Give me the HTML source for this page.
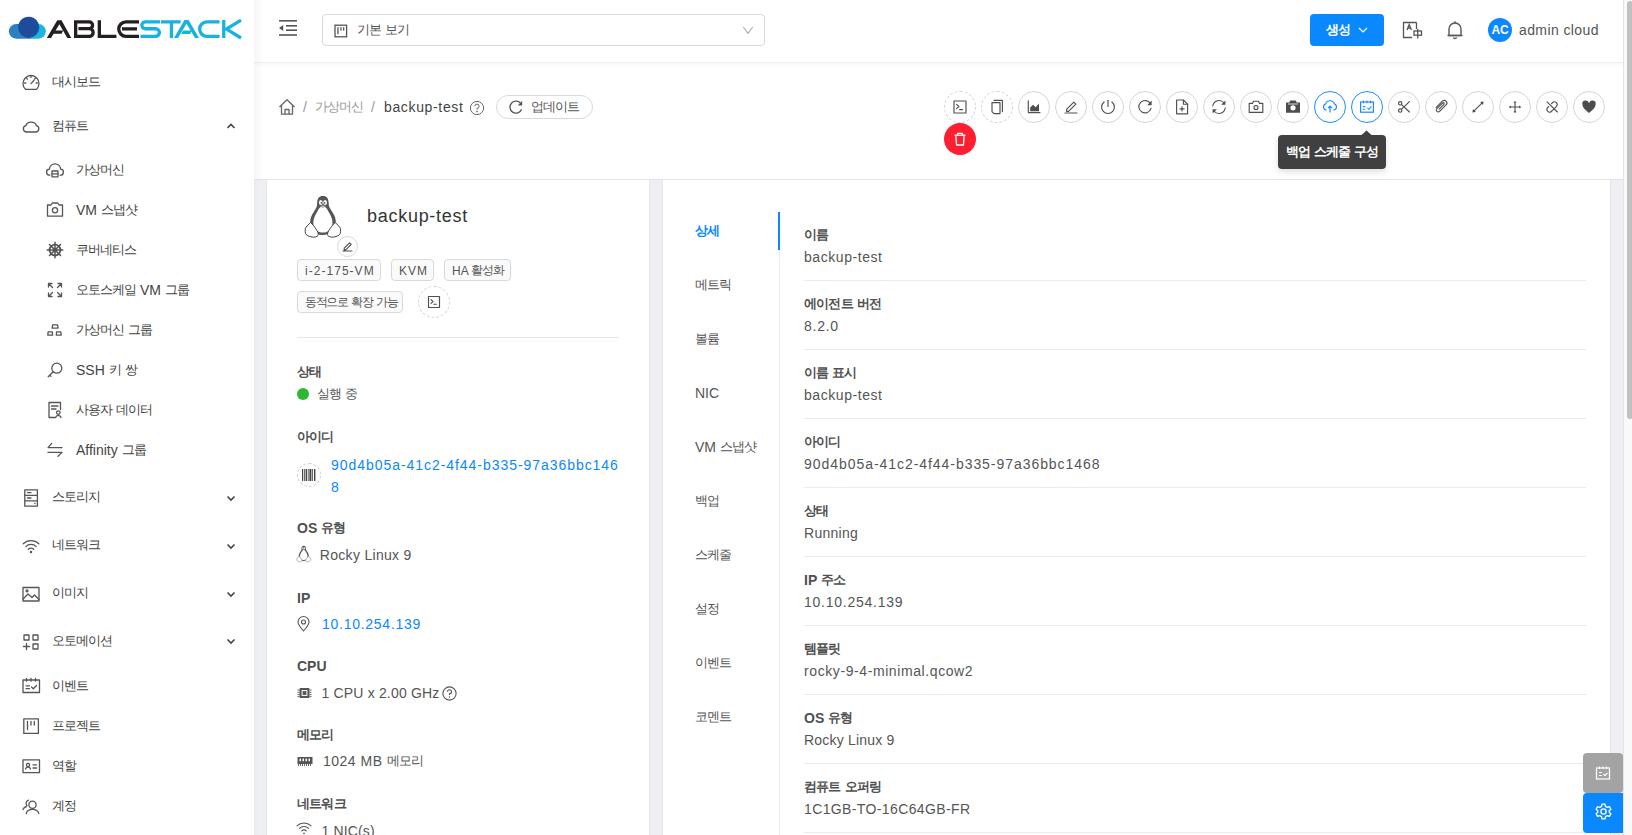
<!DOCTYPE html>
<html><head><meta charset="utf-8"><style>
*{box-sizing:border-box}
html,body{margin:0;padding:0}
body{width:1632px;height:835px;overflow:hidden;position:relative;background:#fff;font-family:"Liberation Sans",sans-serif;color:#444;font-size:14px}
.a{position:absolute}
svg{position:absolute;overflow:visible}
.t{position:absolute;font-size:14px;color:#444;white-space:nowrap;line-height:20px}
.k{font-size:13px;letter-spacing:-1px;position:relative;top:-1px}
.ic{fill:none;stroke:#555;stroke-width:1.3;stroke-linecap:round;stroke-linejoin:round}
.ib{fill:none;stroke:#505050;stroke-width:1.15;stroke-linecap:round;stroke-linejoin:round}
.cb{position:absolute;width:32px;height:32px;border-radius:50%;border:1px solid #d6d6d6;background:#fff}
.cb.d{border-style:dashed}
.cb svg{left:-1px;top:-1px}
.lb{font-weight:bold;color:#505050}
.lb .k{font-size:12.5px;letter-spacing:-0.8px}
.vl{color:#555}
.tag{position:absolute;height:22px;border:1px solid #d9d9d9;background:#fafafa;border-radius:4px;font-size:12px;line-height:20px;color:#555;padding:0 7px;white-space:nowrap}
.tg .k{font-size:11.5px;letter-spacing:-1.3px;top:-0.5px}
.dl{position:absolute;left:804px;width:782px;height:1px;background:#ebebeb}
</style></head><body>
<div class="a" style="left:0;top:0;width:254px;height:835px;background:#fff"></div><div class="a" style="left:254px;top:0;width:1369px;height:62px;background:#fff"></div><div class="a" style="left:254px;top:62px;width:1369px;height:1px;background:#eef0f3"></div><div class="a" style="left:254px;top:63px;width:1369px;height:5px;background:linear-gradient(rgba(0,10,40,.025),rgba(0,0,0,0))"></div><div class="a" style="left:254px;top:179px;width:1369px;height:1px;background:#e3e3e3"></div><div class="a" style="left:254px;top:180px;width:1369px;height:655px;background:#eeeff3"></div><div class="a" style="left:254px;top:0;width:10px;height:179px;background:linear-gradient(90deg,rgba(0,0,0,.03),rgba(0,0,0,0))"></div><div class="a" style="left:254px;top:180px;width:4px;height:655px;background:linear-gradient(90deg,rgba(0,0,0,.03),rgba(0,0,0,0))"></div><div class="a" style="left:266px;top:180px;width:384px;height:660px;background:#fff;border:1px solid #e4e4e4;border-top:none"></div><div class="a" style="left:662px;top:180px;width:949px;height:660px;background:#fff;border:1px solid #e4e4e4;border-top:none"></div><!-- logo -->
<svg style="left:0;top:0" width="254" height="60" viewBox="0 0 254 60">
  <path d="M16.2,24 A7.35,7.35 0 0 0 16.2,38.7 H31 V24 Z" fill="#2b80c2"/>
  <path d="M38.5,24 A7.35,7.35 0 0 1 38.5,38.7 H30 V24 Z" fill="#1bb5e2"/>
  <circle cx="28.7" cy="27.3" r="10.6" fill="#1d4c9c"/>
  <g fill="#231f20">
    <path d="M46.8,38 L57.3,20.2 H61.5 L71.3,38 H67.3 L59.4,24.2 L51,38 Z"/>
    <path d="M55,30.6 H63.2 L61.6,33.8 H53 Z"/>
  </g>
  <g fill="none" stroke="#231f20" stroke-width="3.3">
    <path d="M75.65,20.2 V38 M74,21.85 H89.2 A3.4,3.4 0 0 1 89.2,28.65 H78.4 M74,36.35 H89.3 A3.85,3.85 0 0 0 89.3,28.65"/>
    <path d="M99.35,20.2 V36.35 H116.4"/>
    <path d="M139,21.85 H126 A7.25,7.25 0 0 0 126,36.35 H139 M122,28.8 H137"/>
  </g>
  <g fill="none" stroke="#17b3e0" stroke-width="3.3">
    <path d="M160,21.85 H145.3 A3.45,3.45 0 0 0 145.3,28.75 H155.6 A3.8,3.8 0 0 1 155.6,36.35 H140.5"/>
    <path d="M161,21.85 H180.6 M171.45,21.85 V38"/>
    <path d="M219.6,21.85 H206.9 A7.25,7.25 0 0 0 206.9,36.35 H219.6"/>
    <path d="M223.75,20 V38 M241,20.2 L226.5,29.1 L241,38"/>
  </g>
  <g fill="#17b3e0">
    <path d="M174,38 L184.4,20.1 H188.6 L199,38 H195 L186.5,23.8 L178,38 Z"/>
    <path d="M183.2,30.4 H191.8 L190.2,34 H181 Z"/>
  </g>
</svg>
<!-- dashboard -->
<svg style="left:22px;top:73px" width="18" height="18" viewBox="0 0 18 18"><g class="ic"><path d="M3.6,16.4 A8,8 0 1 1 14.4,16.4 Z"/><path d="M9,10.6 L12,7.3 M9,3.2 V4.4 M4.6,5.3 L5.4,6.1 M2.6,10 H3.8 M14.2,10 H15.4 M13.4,5.3 L12.6,6.1"/></g></svg>
<!-- cloud -->
<svg style="left:22px;top:117px" width="18" height="18" viewBox="0 0 18 18"><path class="ic" d="M4.6,15 H13.6 A3.2,3.2 0 0 0 14.4,8.7 A5.5,5 0 0 0 3.8,8.7 A3.2,3.2 0 0 0 4.6,15 Z"/></svg>
<!-- vm -->
<svg style="left:46px;top:161px" width="18" height="18" viewBox="0 0 18 18"><g class="ic"><path d="M3.8,14.2 A3,3 0 0 1 3.4,8.2 A5.6,5.4 0 0 1 14.6,8.2 A3,3 0 0 1 14.2,14.2"/><rect x="6" y="10" width="6" height="5.8"/><path d="M6,12.9 H12"/></g></svg>
<!-- camera -->
<svg style="left:46px;top:200px" width="18" height="18" viewBox="0 0 18 18"><g class="ic"><path d="M1.5,5 H5 L6.3,3 H11.7 L13,5 H16.5 V16.2 H1.5 Z"/><circle cx="9" cy="10.3" r="2.6"/></g></svg>
<!-- helm -->
<svg style="left:46px;top:241px" width="18" height="18" viewBox="0 0 18 18"><g fill="none" stroke="#555" stroke-linecap="round"><circle cx="9" cy="9" r="5.4" stroke-width="1.9"/><circle cx="9" cy="9" r="1.6" stroke-width="1.4"/><path stroke-width="1.5" d="M9,1.2 V16.8 M1.2,9 H16.8 M3.5,3.5 L14.5,14.5 M14.5,3.5 L3.5,14.5"/></g></svg>
<!-- autoscale -->
<svg style="left:46px;top:281px" width="18" height="18" viewBox="0 0 18 18"><g class="ic"><path d="M2.5,6 V2.5 H6 M2.5,2.5 L6.5,6.5 M12,2.5 H15.5 V6 M15.5,2.5 L11.5,6.5 M2.5,12 V15.5 H6 M2.5,15.5 L6.5,11.5 M15.5,12 V15.5 H12 M15.5,15.5 L11.5,11.5"/></g></svg>
<!-- cluster -->
<svg style="left:46px;top:321px" width="18" height="18" viewBox="0 0 18 18"><g class="ic" stroke-width="1.4"><path d="M6.6,3.9 H11.6 L12,7.2 H6.2 Z"/><path d="M2.1,10.9 H6.3 L6.6,14.2 H1.8 Z"/><path d="M10.6,10.9 H14.8 L15.1,14.2 H10.3 Z"/></g></svg>
<!-- key -->
<svg style="left:46px;top:361px" width="18" height="18" viewBox="0 0 18 18"><g class="ic"><circle cx="10.8" cy="7.2" r="5"/><path d="M7.2,10.8 L2.2,15.8 M3.8,14.2 L5,15.4"/></g></svg>
<!-- userdata -->
<svg style="left:46px;top:401px" width="18" height="18" viewBox="0 0 18 18"><g class="ic"><path d="M9,16.5 H3 V1.5 H14.5 V8.5"/><path d="M5.5,5 H12 M5.5,8 H10"/><circle cx="12.3" cy="11.6" r="1.8"/><path d="M9.6,16.5 A2.8,2.8 0 0 1 15,16.5"/></g></svg>
<!-- affinity -->
<svg style="left:46px;top:441px" width="18" height="18" viewBox="0 0 18 18"><g class="ic" stroke-width="1.4"><path d="M16,6.6 H2 L5.7,2.4 M2,11.4 H16 L12,15.3"/></g></svg>
<!-- storage -->
<svg style="left:22px;top:489px" width="18" height="18" viewBox="0 0 18 18"><g class="ic"><rect x="2.8" y="0.8" width="12.6" height="16.4"/><path d="M2.8,6.3 H15.4 M2.8,11.8 H15.4 M5.5,3.6 H9 M5.5,9 H9 M12.8,14.5 H13"/></g></svg>
<!-- wifi -->
<svg style="left:22px;top:537px" width="18" height="18" viewBox="0 0 18 18"><g class="ic"><path d="M1.2,6.8 A11,11 0 0 1 16.8,6.8 M3.8,9.6 A7.4,7.4 0 0 1 14.2,9.6 M6.3,12.3 A3.8,3.8 0 0 1 11.7,12.3"/><circle cx="9" cy="15" r="0.6" fill="#555"/></g></svg>
<!-- image -->
<svg style="left:22px;top:585px" width="18" height="18" viewBox="0 0 18 18"><g class="ic"><rect x="1" y="2.5" width="16" height="13.5"/><path d="M1,14 L6,9 L10,12.5 L12.5,10 L17,14.5"/><circle cx="5" cy="5.8" r="1"/></g></svg>
<!-- automation -->
<svg style="left:22px;top:633px" width="18" height="18" viewBox="0 0 18 18"><g class="ic"><rect x="2" y="2" width="5" height="5"/><rect x="11" y="2" width="5" height="5"/><rect x="11" y="11" width="5" height="5"/><path d="M4.5,10.5 V16.5 M1.5,13.5 H7.5"/></g></svg>
<!-- event -->
<svg style="left:22px;top:677px" width="18" height="18" viewBox="0 0 18 18"><g class="ic"><rect x="1" y="3" width="16.5" height="12.5"/><path d="M4.5,1.3 V4.2 M9,1.3 V4.2 M13.5,1.3 V4.2 M4,8.8 H7.5 M4,11.6 H7.5 M9.5,10 L11.3,11.8 L14.5,8.5"/></g></svg>
<!-- project -->
<svg style="left:22px;top:717px" width="18" height="18" viewBox="0 0 18 18"><g class="ic" stroke-width="1.5"><rect x="1.8" y="1.8" width="14.6" height="14.6"/><path d="M5.5,4.5 V12.5 M9,4.5 V8 M12.3,4.5 V8"/></g></svg>
<!-- role -->
<svg style="left:22px;top:757px" width="18" height="18" viewBox="0 0 18 18"><g class="ic"><rect x="1" y="2.8" width="16.5" height="12.8"/><circle cx="6" cy="8" r="1.6"/><path d="M3.5,12 A2.6,2.6 0 0 1 8.5,12 M11,7.8 H14.5 M11,11 H14.5"/></g></svg>
<!-- user -->
<svg style="left:22px;top:797px" width="18" height="18" viewBox="0 0 18 18"><g class="ic"><circle cx="10.5" cy="7.8" r="3.6"/><path d="M4.2,16.6 A6.4,5.2 0 0 1 16.8,16.6 M6.6,3.2 A3.2,3.2 0 0 0 5,8.6 M1,12.5 A5,4.5 0 0 1 4.4,9.5"/></g></svg>
<!-- chevrons -->
<svg style="left:225px;top:120px" width="12" height="12" viewBox="0 0 12 12"><path d="M2.5,8 L6,4.5 L9.5,8" fill="none" stroke="#444" stroke-width="1.6"/></svg>
<svg style="left:225px;top:491.6px" width="12" height="12" viewBox="0 0 12 12"><path d="M2.5,4.5 L6,8 L9.5,4.5" fill="none" stroke="#444" stroke-width="1.6"/></svg>
<svg style="left:225px;top:539.6px" width="12" height="12" viewBox="0 0 12 12"><path d="M2.5,4.5 L6,8 L9.5,4.5" fill="none" stroke="#444" stroke-width="1.6"/></svg>
<svg style="left:225px;top:587.7px" width="12" height="12" viewBox="0 0 12 12"><path d="M2.5,4.5 L6,8 L9.5,4.5" fill="none" stroke="#444" stroke-width="1.6"/></svg>
<svg style="left:225px;top:635.4px" width="12" height="12" viewBox="0 0 12 12"><path d="M2.5,4.5 L6,8 L9.5,4.5" fill="none" stroke="#444" stroke-width="1.6"/></svg>
<div class="t" style="left:52px;top:71.5px;;"><span class="k">대시보드</span></div>
<div class="t" style="left:52px;top:115.5px;;"><span class="k">컴퓨트</span></div>
<div class="t" style="left:76px;top:159.5px;;"><span class="k">가상머신</span></div>
<div class="t" style="left:76px;top:199.5px;;">VM <span class="k">스냅샷</span></div>
<div class="t" style="left:76px;top:239.5px;;"><span class="k">쿠버네티스</span></div>
<div class="t" style="left:76px;top:279.5px;;"><span class="k">오토스케일</span> VM <span class="k">그룹</span></div>
<div class="t" style="left:76px;top:319.5px;;"><span class="k">가상머신</span> <span class="k">그룹</span></div>
<div class="t" style="left:76px;top:359.5px;;">SSH <span class="k">키</span> <span class="k">쌍</span></div>
<div class="t" style="left:76px;top:399.5px;;"><span class="k">사용자</span> <span class="k">데이터</span></div>
<div class="t" style="left:76px;top:439.5px;;">Affinity <span class="k">그룹</span></div>
<div class="t" style="left:52px;top:487.1px;;"><span class="k">스토리지</span></div>
<div class="t" style="left:52px;top:535.1px;;"><span class="k">네트워크</span></div>
<div class="t" style="left:52px;top:583.1px;;"><span class="k">이미지</span></div>
<div class="t" style="left:52px;top:631.1px;;"><span class="k">오토메이션</span></div>
<div class="t" style="left:52px;top:675.5px;;"><span class="k">이벤트</span></div>
<div class="t" style="left:52px;top:715.5px;;"><span class="k">프로젝트</span></div>
<div class="t" style="left:52px;top:755.5px;;"><span class="k">역할</span></div>
<div class="t" style="left:52px;top:795.5px;;"><span class="k">계정</span></div>
<svg style="left:278px;top:19px" width="20" height="18" viewBox="0 0 20 18"><g fill="#555">
<rect x="1" y="1" width="18" height="1.6"/><rect x="8" y="6" width="11" height="1.6"/><rect x="8" y="10.4" width="11" height="1.6"/><rect x="1" y="15.2" width="18" height="1.6"/>
<path d="M1,9 L5.2,6 V12 Z"/></g></svg><div class="a" style="left:322px;top:14px;width:443px;height:32px;border:1px solid #d9d9d9;border-radius:4px;background:#fff"></div><svg style="left:334px;top:24px" width="14" height="14" viewBox="0 0 14 14"><g fill="none" stroke="#555" stroke-width="1.3"><rect x="1" y="1.2" width="11.6" height="11.6"/></g><g fill="#555"><rect x="3.3" y="3.2" width="1.3" height="7"/><rect x="6.3" y="3.2" width="1.3" height="3.4"/><rect x="9" y="3.2" width="1.3" height="3.4"/></g></svg><div class="t" style="left:357px;top:19.5px;color:#555;"><span class="k">기본</span> <span class="k">보기</span></div>
<svg style="left:740px;top:24px" width="14" height="12" viewBox="0 0 14 12"><path d="M3.3,3 L8,9.4 L12.7,3" fill="none" stroke="#a8a8a8" stroke-width="1.1"/></svg><div class="a" style="left:1310px;top:14px;width:74px;height:32px;border-radius:4px;background:#0a88ff"></div><div class="t" style="left:1326px;top:19.5px;color:#fff;font-weight:bold;"><span class="k">생성</span></div>
<svg style="left:1357px;top:24px" width="12" height="12" viewBox="0 0 12 12"><path d="M2,4 L6,8 L10,4" fill="none" stroke="#fff" stroke-width="1.2"/></svg><svg style="left:1402px;top:21px" width="22" height="18" viewBox="0 0 22 18"><g fill="none" stroke="#555" stroke-width="1.3">
<path d="M14.5,1.5 H1.5 V16.5 H10"/><path d="M14.5,1.5 V8"/><path d="M5,9 L7.2,3.5 L9.4,9 M5.8,7 H8.6"/>
<rect x="12" y="10" width="7.5" height="4.2"/><path d="M15.75,8 V17.5"/></g></svg><svg style="left:1446px;top:20px" width="18" height="20" viewBox="0 0 18 20"><g fill="none" stroke="#555" stroke-width="1.4">
<path d="M3,15.5 V9 A6,6 0 0 1 15,9 V15.5 Z"/><path d="M1.5,15.5 H16.5"/><path d="M7.3,17.5 A1.9,1.9 0 0 0 10.7,17.5"/><path d="M9,1.2 V3"/></g></svg><div class="a" style="left:1488px;top:18px;width:24px;height:24px;border-radius:50%;background:#0a88ff;color:#fff;font-size:12px;font-weight:bold;line-height:24px;text-align:center;letter-spacing:-0.2px">AC</div><div class="t" id="c1" style="left:1519px;top:19.5px;color:#555;letter-spacing:0.400px;">admin cloud</div>
<svg style="left:278px;top:98px" width="18" height="18" viewBox="0 0 18 18"><g fill="none" stroke="#666" stroke-width="1.3" stroke-linejoin="round">
<path d="M1.5,9 L9,1.8 L16.5,9 M3.5,7.2 V16.2 H14.5 V7.2"/><path d="M7,16.2 V11.5 H11 V16.2"/></g></svg><div class="t" style="left:303px;top:97px;color:#999;">/</div>
<div class="t" style="left:315px;top:97px;color:#999;"><span class="k">가상머신</span></div>
<div class="t" style="left:371px;top:97px;color:#999;">/</div>
<div class="t" id="c2" style="left:384px;top:97px;color:#444;letter-spacing:0.650px;">backup-test</div>
<svg style="left:469px;top:100px" width="16" height="16" viewBox="0 0 16 16"><g fill="none" stroke="#666" stroke-width="1.0"><circle cx="8" cy="8" r="6.6"/><path d="M5.9,6.2 A2.1,2.1 0 1 1 8,8.3 V9.6"/></g><circle cx="8" cy="11.6" r="0.8" fill="#555"/></svg><div class="a" style="left:496px;top:95px;width:97px;height:24px;border:1px solid #d9d9d9;border-radius:12px;background:#fff"></div><svg style="left:508px;top:100px" width="16" height="14" viewBox="0 0 16 14"><g fill="none" stroke="#555" stroke-width="1.3"><path d="M13.2,4.2 A6,6 0 1 0 13.6,9.2"/></g><path d="M14.2,0.8 V5.4 H9.8 Z" fill="#555"/></svg><div class="t" style="left:531px;top:97px;color:#555;"><span class="k">업데이트</span></div>
<div class="cb d" style="left:944px;top:91px;"><svg width="32" height="32" viewBox="0 0 32 32"><rect x="10" y="10" width="12" height="12" class="ib"/><path class="ib" d="M12.6,13.3 L14.9,15.5 L12.6,17.7 M15.6,18.6 H18.6"/></svg></div><div class="cb d" style="left:981px;top:91px;"><svg width="32" height="32" viewBox="0 0 32 32"><path class="ib" d="M13,9.4 H21.4 V20.6"/><path class="ib" d="M11,11.6 H19 V22.6 H13 L11,20.6 Z"/></svg></div><div class="cb" style="left:1018px;top:91px;"><svg width="32" height="32" viewBox="0 0 32 32"><path class="ib" d="M10.3,9.8 V21.6 H22"/><path d="M12.2,20.2 V16.6 L15,13.8 L17.6,16.2 L21,12.4 V20.2 Z" fill="#4d4d4d"/></svg></div><div class="cb" style="left:1055px;top:91px;"><svg width="32" height="32" viewBox="0 0 32 32"><path class="ib" d="M11.6,18.4 L18.8,11.2 L20.8,13.2 L13.6,20.4 H11.6 Z"/><path class="ib" d="M10,22 H22"/></svg></div><div class="cb" style="left:1092px;top:91px;"><svg width="32" height="32" viewBox="0 0 32 32"><path class="ib" d="M12.2,11 A6.4,6.4 0 1 0 19.8,11" stroke-width="1.25"/><path class="ib" d="M16,9.2 V15.4" stroke-width="1.25"/></svg></div><div class="cb" style="left:1129px;top:91px;"><svg width="32" height="32" viewBox="0 0 32 32"><path class="ib" d="M21.4,12.6 A6.2,6.2 0 1 0 22,17.4" stroke-width="1.25"/><path d="M22.6,9.6 V14.2 H18.2 Z" fill="#4d4d4d"/></svg></div><div class="cb" style="left:1166px;top:91px;"><svg width="32" height="32" viewBox="0 0 32 32"><path class="ib" d="M10.6,9 H17.4 L21.6,13.2 V22.8 H10.6 Z"/><path class="ib" d="M17.4,9 V13.2 H21.6"/><path class="ib" d="M16,15.8 V20 M13.9,17.9 H18.1"/></svg></div><div class="cb" style="left:1203px;top:91px;"><svg width="32" height="32" viewBox="0 0 32 32"><path class="ib" d="M9.8,15 A6.3,6.3 0 0 1 21,12 M22.2,17 A6.3,6.3 0 0 1 11,20" stroke-width="1.4"/><path d="M22.4,9.6 V13.8 H18.2 Z M9.6,22.4 V18.2 H13.8 Z" fill="#4d4d4d"/></svg></div><div class="cb" style="left:1240px;top:91px;"><svg width="32" height="32" viewBox="0 0 32 32"><path class="ib" d="M9.2,12.4 H12.4 L13.6,10.2 H18.4 L19.6,12.4 H22.8 V21.4 H9.2 Z"/><circle cx="16" cy="16.6" r="2" class="ib"/></svg></div><div class="cb" style="left:1277px;top:91px;"><svg width="32" height="32" viewBox="0 0 32 32"><path d="M9,11.6 H12.2 L13.4,9.4 H18.6 L19.8,11.6 H23 V21.8 H9 Z" fill="#4d4d4d"/><circle cx="16" cy="16.8" r="2.6" fill="#fff"/><path d="M11,13 H21" stroke="#fff" stroke-width="0.8"/></svg></div><div class="cb" style="left:1314px;top:91px;border-color:#1a8cff;border-width:1.2px"><svg width="32" height="32" viewBox="0 0 32 32"><path d="M12.2,19 A3.1,3.1 0 0 1 11.6,13 A4.6,4.6 0 0 1 20.4,13 A3.1,3.1 0 0 1 19.8,19" fill="none" stroke="#1a8cff" stroke-width="1.2" stroke-linecap="round"/><path d="M16,21.4 V15.2 M14,17.2 L16,15.2 L18,17.2" fill="none" stroke="#1a8cff" stroke-width="1.2"/></svg></div><div class="cb" style="left:1351px;top:91px;border-color:#1a8cff;border-width:1.2px"><svg width="32" height="32" viewBox="0 0 32 32"><rect x="9.6" y="11" width="12.8" height="10.2" fill="none" stroke="#1a8cff" stroke-width="1.2"/><path d="M12.4,9.6 V12.2 M16,9.6 V12.2 M19.6,9.6 V12.2 M11.8,15.6 H14.4 M11.8,18.2 H14.4 M16.4,16.8 L17.9,18.3 L20.4,15.4" fill="none" stroke="#1a8cff" stroke-width="1.1"/></svg></div><div class="cb" style="left:1388px;top:91px;"><svg width="32" height="32" viewBox="0 0 32 32"><path class="ib" d="M13.6,13.6 L21.4,21 M13.6,18.2 L21.4,10.7"/><circle cx="12.2" cy="12.3" r="1.7" class="ib"/><circle cx="12.2" cy="19.5" r="1.7" class="ib"/></svg></div><div class="cb" style="left:1425px;top:91px;"><svg width="32" height="32" viewBox="0 0 32 32"><path class="ib" d="M11.2,16.4 L17.4,10.2 A2.6,2.6 0 0 1 21.1,13.9 L14.6,20.4 A1.9,1.9 0 0 1 11.9,17.7 L17.6,12 A0.95,0.95 0 0 1 18.95,13.35 L14.2,18.1"/></svg></div><div class="cb" style="left:1462px;top:91px;"><svg width="32" height="32" viewBox="0 0 32 32"><path class="ib" d="M11.6,20.4 L20.4,11.6" stroke-width="1.2"/><path d="M21.6,10.4 L21,13.9 L18.1,11 Z M10.4,21.6 L11,18.1 L13.9,21 Z" fill="#4d4d4d"/></svg></div><div class="cb" style="left:1499px;top:91px;"><svg width="32" height="32" viewBox="0 0 32 32"><path class="ib" d="M16,11 V21 M11,16 H21" stroke-width="1.2"/><path d="M16,9.9 L14.6,11.8 H17.4 Z M16,22.1 L14.6,20.2 H17.4 Z M9.9,16 L11.8,14.6 V17.4 Z M22.1,16 L20.2,14.6 V17.4 Z" fill="#4d4d4d"/></svg></div><div class="cb" style="left:1536px;top:91px;"><svg width="32" height="32" viewBox="0 0 32 32"><path class="ib" d="M16.9,18.9 L20.5,15.3 A2.7,2.7 0 0 0 16.7,11.5 L15.5,12.7 M12.7,15.5 L11.5,16.7 A2.7,2.7 0 0 0 15.3,20.5 L16.3,19.5 M11,10.8 L21.4,21"/></svg></div><div class="cb" style="left:1573px;top:91px;"><svg width="32" height="32" viewBox="0 0 32 32"><path d="M16,22 C11.6,18.6 9.4,16.6 9.4,13.6 A3.3,3.3 0 0 1 16,12.2 A3.3,3.3 0 0 1 22.6,13.6 C22.6,16.6 20.4,18.6 16,22 Z" fill="#4d4d4d"/></svg></div><div class="a" style="left:944px;top:123px;width:32px;height:32px;border-radius:50%;background:#ff1f30;box-shadow:0 2px 0 rgba(0,0,0,.02)"><svg style="left:0;top:0" width="32" height="32" viewBox="0 0 32 32"><g fill="none" stroke="#fff" stroke-width="1.3" stroke-linejoin="round"><path d="M10.6,12.2 H21.4"/><path d="M13.6,12.2 V10.4 H18.4 V12.2"/><path d="M11.8,12.2 L12.6,22 H19.4 L20.2,12.2"/></g></svg></div><div class="a" style="left:1278px;top:135px;width:108px;height:34px;border-radius:4px;background:#404040;box-shadow:0 3px 6px rgba(0,0,0,.12)"></div><svg style="left:1360px;top:130px" width="14" height="6" viewBox="0 0 14 6"><path d="M1,5.5 L6.5,0.4 L12,5.5 Z" fill="#404040"/></svg><div class="t" style="left:1286px;top:141.5px;color:#fff;font-weight:bold;"><span class="k">백업</span> <span class="k">스케줄</span> <span class="k">구성</span></div>
<svg style="left:303px;top:194px" width="40" height="45" viewBox="0 0 40 45">
<path d="M19.9,1.9 C16,1.9 14.2,4.5 14.2,8.5 C14.2,12 13.5,14 11,17.5 C8.5,21 7,24.5 7.2,29 L10,36 C12,39.5 15,41 19.5,41 C24,41 27,39.5 29,36 L32.8,29 C33,24.5 31.5,21 29,17.5 C26.5,14 25.6,12 25.6,8.5 C25.6,4.5 23.8,1.9 19.9,1.9 Z" fill="#555"/>
<path d="M19.9,12.5 C16.5,12.5 15.8,15 13.8,18.5 C11.2,22.8 10,26 10.4,30 C11,35.3 14.6,38.6 19.9,38.6 C25.2,38.6 28.8,35.3 29.4,30 C29.8,26 28.6,22.8 26,18.5 C24,15 23.3,12.5 19.9,12.5 Z" fill="#fff"/>
<ellipse cx="17.8" cy="8.4" rx="1.9" ry="2.5" fill="#fff"/><ellipse cx="22.1" cy="8.4" rx="1.9" ry="2.5" fill="#fff"/>
<circle cx="18.3" cy="8.9" r="0.8" fill="#444"/><circle cx="21.6" cy="8.9" r="0.8" fill="#444"/>
<path d="M16.6,12 Q19.9,10.4 23.2,12 Q19.9,14.4 16.6,12 Z" fill="#fff" stroke="#555" stroke-width="0.7"/>
<path d="M7.5,28.5 L3.2,33 C1.8,34.5 2,37.2 2.6,39.4 C3.2,41.6 6,42.5 9,43 C11.5,43.5 14,42.8 15,41.5 C15.8,40 14.8,37.5 13,35 C11.5,32.8 9.5,30 7.5,28.5 Z" fill="#fff" stroke="#444" stroke-width="1"/>
<path d="M 32.3,28.5 L 36.6,33.0 C 38.0,34.5 37.8,37.2 37.2,39.4 C 36.6,41.6 33.8,42.5 30.8,43.0 C 28.3,43.5 25.8,42.8 24.8,41.5 C 24.0,40.0 25.0,37.5 26.8,35.0 C 28.3,32.8 30.3,30.0 32.3,28.5 Z" fill="#fff" stroke="#444" stroke-width="1"/>
</svg><div class="t" id="c3" style="left:367px;top:206px;font-size:18px;color:#333;letter-spacing:0.720px;">backup-test</div>
<div class="a" style="left:337px;top:236px;width:21px;height:21px;border-radius:50%;border:1px solid #d9d9d9;background:#fff"><svg style="left:0;top:0" width="20" height="20" viewBox="0 0 20 20"><path class="ib" stroke-width="1" d="M6.2,11.2 L11.6,5.8 L13.2,7.4 L7.8,12.8 H6.2 Z M4.8,14 H14"/></svg></div><div class="tag" style="left:297px;top:259px;width:84px"></div><div class="t tg" id="c4" style="left:305px;top:260.5px;font-size:12px;color:#555;letter-spacing:1.033px;">i-2-175-VM</div>
<div class="tag" style="left:391px;top:259px;width:43px"></div><div class="t tg" id="c5" style="left:399px;top:260.5px;font-size:12px;color:#555;letter-spacing:0.950px;">KVM</div>
<div class="tag" style="left:444px;top:259px;width:67px"></div><div class="t tg" style="left:452px;top:260.5px;font-size:12px;color:#555;">HA <span class="k">활성화</span></div>
<div class="tag" style="left:297px;top:291px;width:106px"></div><div class="t tg" style="left:305px;top:292.5px;font-size:12px;color:#555;"><span class="k">동적으로</span> <span class="k">확장</span> <span class="k">가능</span></div>
<div class="cb d" style="left:418px;top:286px;width:32px;height:32px"><svg width="32" height="32" viewBox="0 0 32 32"><rect x="10.5" y="10.5" width="11" height="11" class="ib" stroke-width="1.1"/><path class="ib" stroke-width="1.1" d="M13,13.6 L15,15.5 L13,17.4 M15.8,18.2 H18.4"/></svg></div><div class="a" style="left:297px;top:337px;width:322px;height:1px;background:#e8e8e8"></div><div class="t lb" style="left:297px;top:362px;;"><span class="k">상태</span></div>
<div class="a" style="left:297px;top:388px;width:12px;height:12px;border-radius:50%;background:#2db833"></div><div class="t" style="left:317px;top:384px;color:#555;"><span class="k">실행</span> <span class="k">중</span></div>
<div class="t lb" style="left:297px;top:426.5px;;"><span class="k">아이디</span></div>
<div class="a" style="left:297px;top:463px;width:24px;height:24px;border-radius:50%;border:1px dashed #d0d0d0"></div><svg style="left:302px;top:469px" width="14" height="12" viewBox="0 0 14 12"><g fill="#444"><rect x="0" y="0" width="1.2" height="12"/><rect x="2" y="0" width="0.8" height="12"/><rect x="3.6" y="0" width="1.4" height="12"/><rect x="5.8" y="0" width="0.8" height="12"/><rect x="7.4" y="0" width="2" height="12"/><rect x="10.2" y="0" width="0.8" height="12"/><rect x="12" y="0" width="1.4" height="12"/></g></svg><div class="a" style="left:331px;top:453.5px;width:288px;font-size:14px;line-height:22.5px;color:#0a88ff;word-break:break-all;letter-spacing:0.95px">90d4b05a-41c2-4f44-b335-97a36bbc1468</div><div class="t lb" style="left:297px;top:517.5px;;">OS <span class="k">유형</span></div>
<svg style="left:296.3px;top:545.3px" width="15.6" height="17.6" viewBox="0 0 40 45">
<path d="M19.9,1.9 C16,1.9 14.2,4.5 14.2,8.5 C14.2,12 13.5,14 11,17.5 C8.5,21 7,24.5 7.2,29 L10,36 C12,39.5 15,41 19.5,41 C24,41 27,39.5 29,36 L32.8,29 C33,24.5 31.5,21 29,17.5 C26.5,14 25.6,12 25.6,8.5 C25.6,4.5 23.8,1.9 19.9,1.9 Z" fill="#555"/>
<path d="M19.9,12.5 C16.5,12.5 15.8,15 13.8,18.5 C11.2,22.8 10,26 10.4,30 C11,35.3 14.6,38.6 19.9,38.6 C25.2,38.6 28.8,35.3 29.4,30 C29.8,26 28.6,22.8 26,18.5 C24,15 23.3,12.5 19.9,12.5 Z" fill="#fff"/>
<ellipse cx="17.8" cy="8.4" rx="1.9" ry="2.5" fill="#fff"/><ellipse cx="22.1" cy="8.4" rx="1.9" ry="2.5" fill="#fff"/>
<circle cx="18.3" cy="8.9" r="0.8" fill="#444"/><circle cx="21.6" cy="8.9" r="0.8" fill="#444"/>
<path d="M16.6,12 Q19.9,10.4 23.2,12 Q19.9,14.4 16.6,12 Z" fill="#fff" stroke="#555" stroke-width="0"/>
<path d="M7.5,28.5 L3.2,33 C1.8,34.5 2,37.2 2.6,39.4 C3.2,41.6 6,42.5 9,43 C11.5,43.5 14,42.8 15,41.5 C15.8,40 14.8,37.5 13,35 C11.5,32.8 9.5,30 7.5,28.5 Z" fill="#fff" stroke="#888" stroke-width="1.5"/>
<path d="M 32.3,28.5 L 36.6,33.0 C 38.0,34.5 37.8,37.2 37.2,39.4 C 36.6,41.6 33.8,42.5 30.8,43.0 C 28.3,43.5 25.8,42.8 24.8,41.5 C 24.0,40.0 25.0,37.5 26.8,35.0 C 28.3,32.8 30.3,30.0 32.3,28.5 Z" fill="#fff" stroke="#888" stroke-width="1.5"/>
</svg><div class="t" id="c6" style="left:319.8px;top:544.5px;color:#555;letter-spacing:0.300px;">Rocky Linux 9</div>
<div class="t lb" style="left:297px;top:587.5px;;">IP</div>
<svg style="left:297px;top:616px" width="14" height="16" viewBox="0 0 14 16"><g fill="none" stroke="#555" stroke-width="1.1"><path d="M6.5,15 C3,11 1,8.5 1,6 A5.5,5.5 0 0 1 12,6 C12,8.5 10,11 6.5,15 Z"/><circle cx="6.5" cy="6" r="2"/></g></svg><div class="t" id="c7" style="left:322px;top:614px;color:#0a88ff;letter-spacing:0.733px;">10.10.254.139</div>
<div class="t lb" style="left:297px;top:656px;;">CPU</div>
<svg style="left:297px;top:686px" width="15" height="14" viewBox="0 0 15 14"><g fill="#555"><rect x="2.5" y="2" width="10" height="10" rx="1"/></g><rect x="4.6" y="4.1" width="5.8" height="5.8" fill="#fff"/><rect x="5.6" y="5.1" width="3.8" height="3.8" fill="#555"/><g stroke="#555" stroke-width="0.9"><path d="M0.5,4 H2.5 M0.5,6.3 H2.5 M0.5,8.6 H2.5 M0.5,10.6 H2.5 M12.5,4 H14.5 M12.5,6.3 H14.5 M12.5,8.6 H14.5 M12.5,10.6 H14.5"/></g></svg><div class="t" id="c8" style="left:321.5px;top:682.5px;color:#555;letter-spacing:0.173px;">1 CPU x 2.00 GHz</div>
<svg style="left:442px;top:686px" width="16" height="16" viewBox="0 0 16 16"><g fill="none" stroke="#555" stroke-width="1.1"><circle cx="7.5" cy="7.5" r="6.6"/><path d="M5.5,5.8 A2,2 0 1 1 7.5,7.8 V9"/></g><circle cx="7.5" cy="11" r="0.75" fill="#555"/></svg><div class="t lb" style="left:297px;top:725px;;"><span class="k">메모리</span></div>
<svg style="left:297px;top:756px" width="16" height="11" viewBox="0 0 16 11"><rect x="0.5" y="1" width="15" height="7" fill="#555"/><g fill="#fff"><rect x="2.5" y="2.6" width="1.5" height="2.6"/><rect x="5.5" y="2.6" width="1.5" height="2.6"/><rect x="8.5" y="2.6" width="1.5" height="2.6"/><rect x="11.5" y="2.6" width="1.5" height="2.6"/></g><g stroke="#555" stroke-width="0.9"><path d="M1.5,8 V10 M3.5,8 V10 M5.5,8 V10 M7.5,8 V10 M9.5,8 V10 M11.5,8 V10 M13.5,8 V10"/></g></svg><div class="t" id="c9" style="left:323px;top:751px;color:#555;letter-spacing:0.500px;">1024 MB <span class="k">메모리</span></div>
<div class="t lb" style="left:297px;top:794px;;"><span class="k">네트워크</span></div>
<svg style="left:296px;top:821px" width="16" height="14" viewBox="0 0 16 14"><g fill="none" stroke="#555" stroke-width="1.1" stroke-linecap="round"><path d="M1,4.8 A10,10 0 0 1 15,4.8 M3.4,7.4 A6.4,6.4 0 0 1 12.6,7.4 M5.6,10 A3.2,3.2 0 0 1 10.4,10"/></g><circle cx="8" cy="12.4" r="0.8" fill="#555"/></svg><div class="t" id="c10" style="left:321.5px;top:821px;color:#555;letter-spacing:0.143px;">1 NIC(s)</div>
<div class="a" style="left:779px;top:212px;width:1px;height:623px;background:#ececec"></div><div class="a" style="left:778px;top:212px;width:2px;height:38px;background:#0a88ff"></div><div class="t" style="left:695px;top:220.5px;color:#0a88ff;font-weight:bold;"><span class="k">상세</span></div>
<div class="t" style="left:695px;top:274.5px;color:#555;"><span class="k">메트릭</span></div>
<div class="t" style="left:695px;top:328.5px;color:#555;"><span class="k">볼륨</span></div>
<div class="t" style="left:695px;top:382.5px;color:#555;">NIC</div>
<div class="t" style="left:695px;top:436.5px;color:#555;">VM <span class="k">스냅샷</span></div>
<div class="t" style="left:695px;top:490.5px;color:#555;"><span class="k">백업</span></div>
<div class="t" style="left:695px;top:544.5px;color:#555;"><span class="k">스케줄</span></div>
<div class="t" style="left:695px;top:598.5px;color:#555;"><span class="k">설정</span></div>
<div class="t" style="left:695px;top:652.5px;color:#555;"><span class="k">이벤트</span></div>
<div class="t" style="left:695px;top:706.5px;color:#555;"><span class="k">코멘트</span></div>
<div class="t lb" style="left:804px;top:225px;;"><span class="k">이름</span></div>
<div class="t" id="c11" style="left:804px;top:247px;color:#555;letter-spacing:0.560px;">backup-test</div>
<div class="dl" style="top:280px"></div><div class="t lb" style="left:804px;top:294px;;"><span class="k">에이전트</span> <span class="k">버전</span></div>
<div class="t" id="c12" style="left:804px;top:316px;color:#555;letter-spacing:0.750px;">8.2.0</div>
<div class="dl" style="top:349px"></div><div class="t lb" style="left:804px;top:363px;;"><span class="k">이름</span> <span class="k">표시</span></div>
<div class="t" id="c13" style="left:804px;top:385px;color:#555;letter-spacing:0.560px;">backup-test</div>
<div class="dl" style="top:418px"></div><div class="t lb" style="left:804px;top:432px;;"><span class="k">아이디</span></div>
<div class="t" id="c14" style="left:804px;top:454px;color:#555;letter-spacing:0.949px;">90d4b05a-41c2-4f44-b335-97a36bbc1468</div>
<div class="dl" style="top:487px"></div><div class="t lb" style="left:804px;top:501px;;"><span class="k">상태</span></div>
<div class="t" id="c15" style="left:804px;top:523px;color:#555;letter-spacing:0.267px;">Running</div>
<div class="dl" style="top:556px"></div><div class="t lb" style="left:804px;top:570px;;">IP <span class="k">주소</span></div>
<div class="t" id="c16" style="left:804px;top:592px;color:#555;letter-spacing:0.758px;">10.10.254.139</div>
<div class="dl" style="top:625px"></div><div class="t lb" style="left:804px;top:639px;;"><span class="k">템플릿</span></div>
<div class="t" id="c17" style="left:804px;top:661px;color:#555;letter-spacing:0.591px;">rocky-9-4-minimal.qcow2</div>
<div class="dl" style="top:694px"></div><div class="t lb" style="left:804px;top:708px;;">OS <span class="k">유형</span></div>
<div class="t" id="c18" style="left:804px;top:730px;color:#555;letter-spacing:0.200px;">Rocky Linux 9</div>
<div class="dl" style="top:763px"></div><div class="t lb" style="left:804px;top:777px;;"><span class="k">컴퓨트</span> <span class="k">오퍼링</span></div>
<div class="t" id="c19" style="left:804px;top:799px;color:#555;letter-spacing:0.378px;">1C1GB-TO-16C64GB-FR</div>
<div class="dl" style="top:832px"></div><div class="a" style="left:1623px;top:0;width:9px;height:835px;background:#f9f9f9;border-left:1px solid #e4e4e4"></div><div class="a" style="left:1627px;top:1px;width:6px;height:418px;background:#c1c1c1;border-radius:4px"></div><div class="a" style="left:1583px;top:753px;width:40px;height:40px;border-radius:4px;background:#a3a3a3"></div><svg style="left:1595px;top:765px" width="16" height="16" viewBox="0 0 16 16"><rect x="1.5" y="3" width="13" height="11" fill="none" stroke="#fff" stroke-width="1.2"/><path d="M4.5,1.5 V4 M8,1.5 V4 M11.5,1.5 V4 M4,7.5 H6.8 M4,10.5 H6.8 M8.4,9 L10,10.6 L12.4,7.8" fill="none" stroke="#fff" stroke-width="1.1"/></svg><div class="a" style="left:1583px;top:793px;width:40px;height:40px;border-radius:4px 0 0 4px;background:#0a88ff"></div><svg style="left:1595px;top:803px" width="17" height="17" viewBox="0 0 17 17"><g fill="none" stroke="#fff" stroke-width="1.3" stroke-linejoin="round"><path d="M7,1.2 H10 L10.5,3.4 L12.3,4.4 L14.4,3.6 L15.9,6.2 L14.2,7.7 V9.3 L15.9,10.8 L14.4,13.4 L12.3,12.6 L10.5,13.6 L10,15.8 H7 L6.5,13.6 L4.7,12.6 L2.6,13.4 L1.1,10.8 L2.8,9.3 V7.7 L1.1,6.2 L2.6,3.6 L4.7,4.4 L6.5,3.4 Z"/><circle cx="8.5" cy="8.5" r="2.6"/></g></svg></body></html>
